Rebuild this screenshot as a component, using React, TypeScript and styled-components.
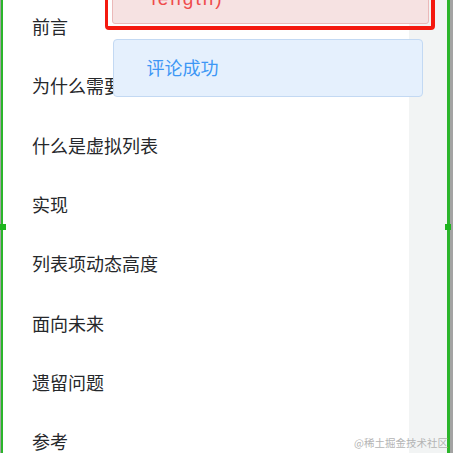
import React from "react";
import styled, { createGlobalStyle } from "styled-components";

const Global = createGlobalStyle`
  html, body { margin: 0; padding: 0; background: #ffffff; }
  body { font-family: "Noto Sans CJK SC", "Noto Sans", sans-serif; }
`;

const Frame = styled.div`
  position: relative;
  width: 453px;
  height: 453px;
  overflow: hidden;
  display: flex;
  background: #ffffff;
`;

const Edge = styled.div<{ $side: "left" | "right" }>`
  flex: none;
  display: flex;
  flex-direction: ${(p) => (p.$side === "left" ? "row" : "row-reverse")};
  width: ${(p) => (p.$side === "left" ? "3px" : "6px")};
  &::before {
    content: "";
    width: ${(p) => (p.$side === "left" ? "1px" : "3px")};
    background: #a3a3a3;
  }
  &::after {
    content: "";
    width: ${(p) => (p.$side === "left" ? "2px" : "3px")};
    background: #2bb52b;
  }
`;

const Content = styled.div`
  flex: 1;
  overflow: hidden;
`;

const List = styled.ul`
  list-style: none;
  margin: -3.6px 0 0;
  padding: 0 0 0 29px;
`;

const Item = styled.li`
  height: 59.3px;
  display: flex;
  align-items: center;
  font-size: 18px;
  color: #26282b;
  white-space: nowrap;
`;

const Track = styled.div`
  flex: none;
  width: 38px;
  background: #f2f4f4;
`;

const Handle = styled.div<{ $x: number }>`
  position: absolute;
  left: ${(p) => p.$x}px;
  top: 224px;
  width: 6px;
  height: 6px;
  background: #1fb51f;
`;

const Outline = styled.div`
  position: absolute;
  left: 105px;
  top: -10px;
  width: 317px;
  height: 30px;
  border: 4px solid #f4190f;
  border-left-width: 3.5px;
  border-radius: 4px;
  padding: 0 2px 1.5px 3.5px;
`;

const ErrorBox = styled.div`
  height: 100%;
  box-sizing: border-box;
  background: #f6e2e2;
  border: 1px solid #ebb9b9;
  border-radius: 3px;
  padding-left: 39px;
  display: flex;
  align-items: flex-end;
  overflow: hidden;
`;

const ErrorText = styled.span`
  color: #ef4b4b;
  font-family: "Liberation Sans", "Noto Sans", sans-serif;
  font-size: 19px;
  letter-spacing: 2px;
  line-height: 1;
  margin-bottom: 15px;
`;

const Toast = styled.div`
  position: absolute;
  left: 112.5px;
  top: 39.3px;
  width: 310px;
  height: 58px;
  box-sizing: border-box;
  background: #e5f0fd;
  border: 1px solid #c3d9f3;
  border-radius: 4px;
  padding: 0 0 2px 33px;
  display: flex;
  align-items: center;
  font-size: 18px;
  color: #3d97f5;
`;

const Watermark = styled.div`
  position: absolute;
  right: 5px;
  bottom: 3px;
  font-size: 10.5px;
  color: #b4b4b4;
  white-space: nowrap;
`;

const items = [
  "前言",
  "为什么需要虚拟列表",
  "什么是虚拟列表",
  "实现",
  "列表项动态高度",
  "面向未来",
  "遗留问题",
  "参考",
];

export default function App() {
  return (
    <>
      <Global />
      <Frame>
        <Edge $side="left" />
        <Content>
          <List>
            {items.map((t) => (
              <Item key={t}>{t}</Item>
            ))}
          </List>
        </Content>
        <Track />
        <Edge $side="right" />
        <Handle $x={0} />
        <Handle $x={445} />
        <Outline>
          <ErrorBox>
            <ErrorText>length)</ErrorText>
          </ErrorBox>
        </Outline>
        <Toast>评论成功</Toast>
        <Watermark>@稀土掘金技术社区</Watermark>
      </Frame>
    </>
  );
}
